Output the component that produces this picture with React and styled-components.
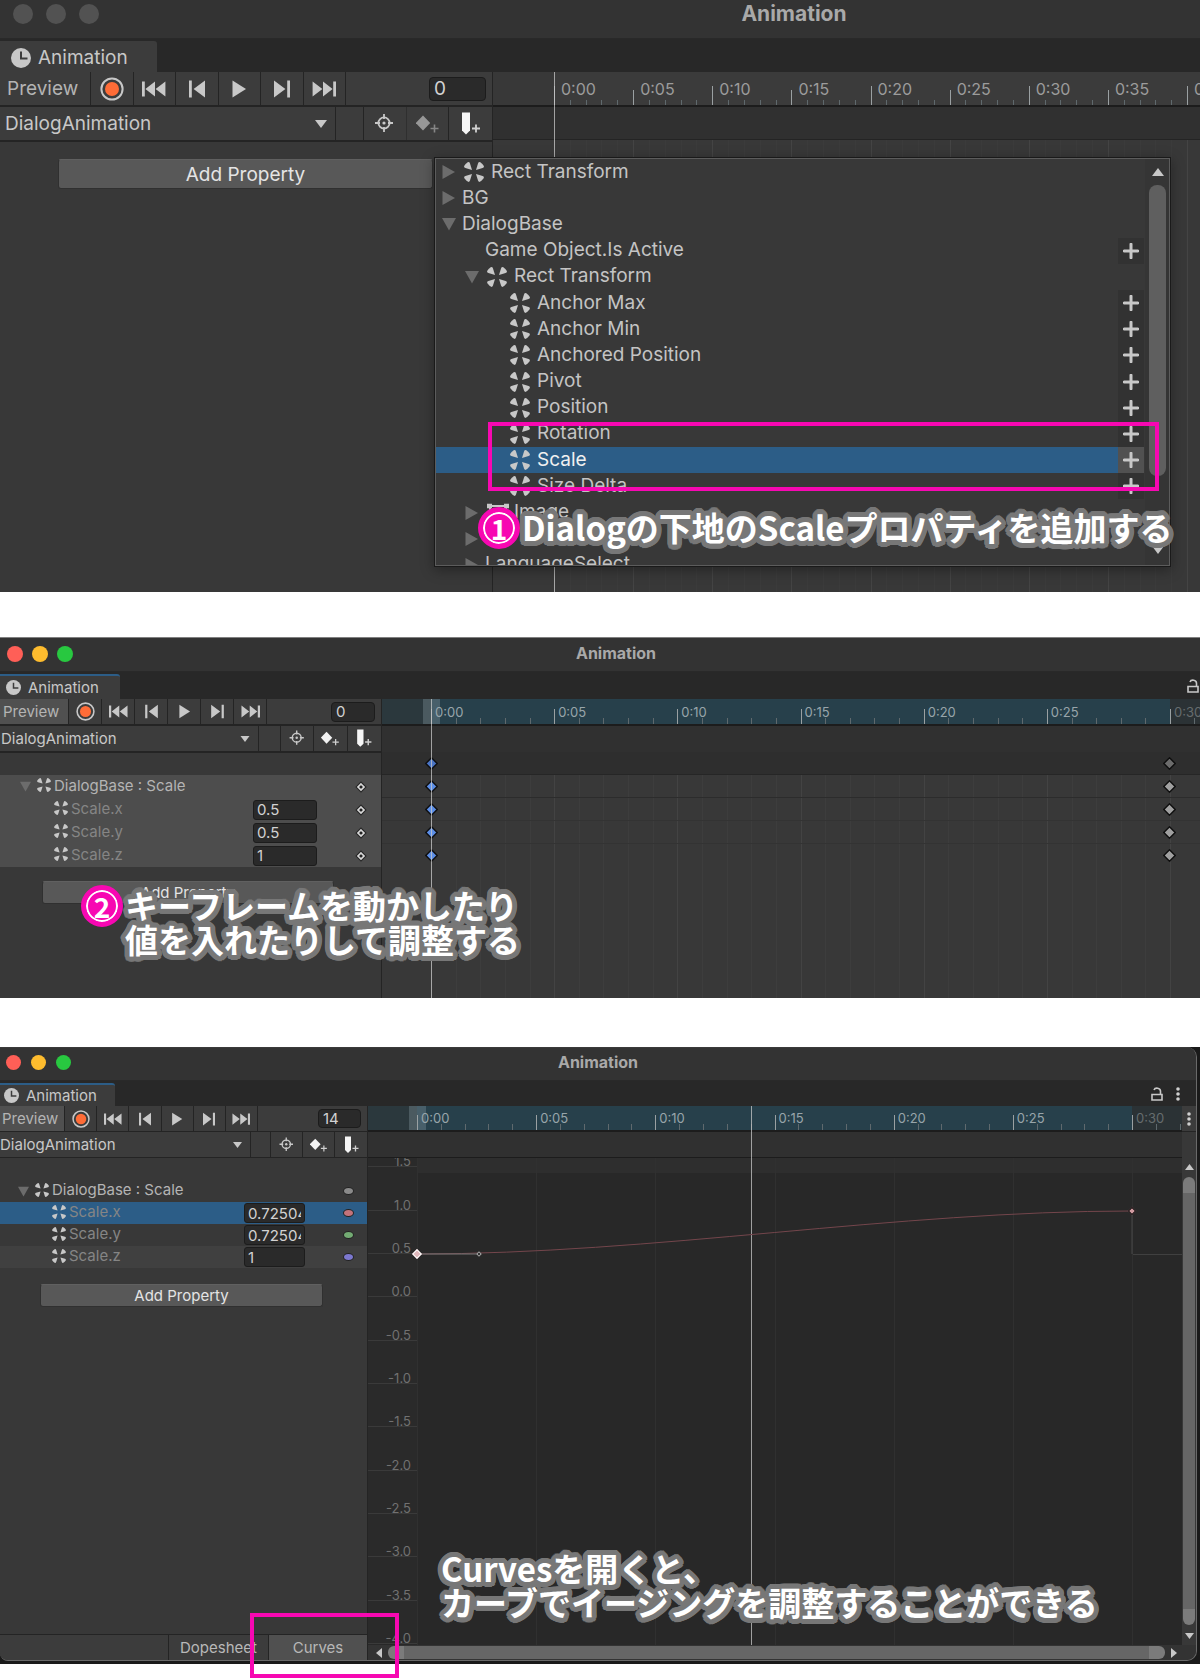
import React from "react";
import styled, { createGlobalStyle, css, ThemeProvider } from "styled-components";

const PINK = "#f708b2";
const LINE = "#242424";

const GlobalStyle = createGlobalStyle`
  *, *::before, *::after { box-sizing: border-box; }
  body {
    margin: 0;
    background: #fff;
    color: #c8c8c8;
    font-family: Inter, "Noto Sans CJK JP", sans-serif;
  }
  button, input, select {
    font: inherit;
    color: inherit;
    margin: 0;
    padding: 0;
    border: 0;
    background: none;
  }
`;

/* Metrics of each captured window: the captures have different zoom levels. */
const large = {
  text: 19, title: 21, tick: 16, icon: 24, iconH: 16, clock: 20,
  over: 388, bar: 39, dot: 20, dotGap: 13, dotPad: 13, barPad: 11,
  tabs: 33, tabW: 157, tabPad: 11, row: 35, side: 493,
  preview: 90, previewPad: 7, group: 256, field: 57, fieldH: 24,
  select: 335, selectPad: 5, gap: 28, actions: 129,
  lead: 61, tail: 13, label: 7, major: 15, minor: 5, add: 58, addH: 30,
  line: 2,
};
const medium = {
  text: 15, title: 16, tick: 13, icon: 19, iconH: 13, clock: 15,
  over: 32, bar: 35, dot: 16, dotGap: 9, dotPad: 7, barPad: 2,
  tabs: 27, tabW: 120, tabPad: 6, row: 27, side: 382,
  preview: 68, previewPad: 3, group: 199, field: 44, fieldH: 20,
  select: 258, selectPad: 1, gap: 22, actions: 101,
  lead: 49, tail: 30, label: 4, major: 15, minor: 6, add: 42, addH: 23,
  rowH: 23, indent: 20, value: 64, valueEnd: 36, keyEnd: 14, line: 2,
};
const small = {
  ...medium,
  icon: 18, iconH: 12,
  over: 0, bar: 34, dot: 15, dotGap: 10, dotPad: 6, barPad: 3,
  tabs: 25, tabW: 115, tabPad: 4, row: 26, side: 368,
  preview: 64, previewPad: 2, group: 194, field: 43, fieldH: 19,
  select: 250, selectPad: 0, gap: 20, actions: 97,
  lead: 49, tail: 50, add: 40, rowH: 22, indent: 18, value: 61, valueEnd: 36, keyEnd: 13,
  line: 1,
};

const px = (key) => ({ theme }) => `${theme[key]}px`;

/* ---------- window frame ---------- */

const Page = styled.main`
  display: flex;
  flex-direction: column;
  overflow: hidden;
`;
const Frame = styled.section`
  position: relative;
  display: flex;
  flex-direction: column;
  height: ${(p) => p.$height}px;
  margin-bottom: ${(p) => p.$after}px;
  background: #383838;
  font-size: ${px("text")};
  line-height: 1;
  white-space: nowrap;
`;
const Clip = styled.div`
  flex: 1;
  display: flex;
  flex-direction: column;
  min-height: 0;
  overflow: hidden;
  ${(p) => p.$rounded && css`
    margin-right: 3px;
    border-right: 1px solid #6a6a6a;
    border-bottom: 1px solid #6a6a6a;
    border-radius: 0 10px 10px 8px;
  `}
`;
const TitleBar = styled.header`
  display: grid;
  grid-template-columns: 1fr auto 1fr;
  align-items: center;
  flex: none;
  width: calc(100% + ${px("over")});
  height: ${px("bar")};
  padding: 0 ${px("dotPad")} ${px("barPad")};
  background: #333;
  border-top: 1px solid ${(p) => p.$edge};
  border-bottom: 1px solid #292929;
`;
const Lights = styled.div`
  display: flex;
  gap: ${px("dotGap")};
`;
const Light = styled.span`
  width: ${px("dot")};
  height: ${px("dot")};
  border-radius: 50%;
  background: ${(p) => p.$color};
`;
const Title = styled.h2`
  margin: 0;
  padding-bottom: 1px;
  font-size: ${px("title")};
  font-weight: 700;
  line-height: 1;
  color: #a9a9a9;
`;
const TabBar = styled.div`
  display: flex;
  align-items: stretch;
  flex: none;
  width: calc(100% + ${px("over")});
  height: ${px("tabs")};
  padding: 2px 16px 0 0;
  background: #282828;
`;
const Tab = styled.button`
  display: flex;
  align-items: center;
  gap: 7px;
  width: ${px("tabW")};
  padding-left: ${px("tabPad")};
  background: #3c3c3c;
  border-top: 2px solid ${(p) => (p.$focused ? "#2c5d87" : "#3c3c3c")};
  border-radius: 0 3px 0 0;
`;
const TabTools = styled.div`
  display: flex;
  align-items: center;
  gap: 13px;
  margin-left: auto;
  padding-bottom: 2px;
`;
const IconButton = styled.button`
  display: flex;
  align-items: center;
  justify-content: center;
`;

/* ---------- left side ---------- */

const Body = styled.div`
  display: flex;
  flex: 1;
  min-height: 0;
`;
const Side = styled.div`
  display: flex;
  flex-direction: column;
  flex: none;
  width: ${px("side")};
  border-right: 1px solid ${LINE};
`;
const ToolRow = styled.div`
  display: flex;
  align-items: stretch;
  flex: none;
  height: ${px("row")};
  background: #3c3c3c;
  border-bottom: ${px("line")} solid ${LINE};
`;
const Preview = styled.button`
  width: ${px("preview")};
  padding-left: ${px("previewPad")};
  text-align: left;
  color: #b4b4b4;
  background: ${(p) => (p.$on ? "#505050" : "transparent")};
`;
const Group = styled.div`
  display: flex;
  width: ${(p) => p.theme[p.$size]}px;
  border-right: 1px solid ${(p) => (p.$closed ? LINE : "transparent")};
`;
const ToolButton = styled.button`
  display: flex;
  flex: 1;
  align-items: center;
  justify-content: center;
  min-width: 0;
  border-left: 1px solid ${LINE};
  opacity: ${(p) => (p.disabled ? 0.5 : 1)};
`;
const FrameField = styled.input`
  width: ${px("field")};
  height: ${px("fieldH")};
  margin: auto 6px auto auto;
  padding: 0 4px;
  background: #2a2a2a;
  border: 1px solid #1c1c1c;
  border-radius: 4px;
  color: #d2d2d2;
`;
const ClipPicker = styled.label`
  display: flex;
  align-items: center;
  width: ${px("select")};
  padding: 0 8px 0 ${px("selectPad")};
`;
const ClipSelect = styled.select`
  flex: 1;
  min-width: 0;
  appearance: none;
  outline: 0;
  line-height: 24px;
`;
const Blank = styled.div`
  width: ${px("gap")};
  border-left: 1px solid ${LINE};
`;
const AddButton = styled.button`
  flex: none;
  height: ${px("addH")};
  margin: ${(p) => p.$top}px ${(p) => p.$right}px 0 ${px("add")};
  background: #585858;
  border: 1px solid #303030;
  border-top-color: #606060;
  border-radius: 3px;
  color: #e4e4e4;
`;
const PropertyList = styled.ul`
  margin: ${(p) => p.$top}px 0 0;
  padding: 0;
  list-style: none;
`;
const PropertyRow = styled.li`
  display: flex;
  align-items: center;
  gap: 2px;
  height: ${px("rowH")};
  padding-left: ${(p) => (p.$child ? p.theme.indent + 34 : p.theme.indent)}px;
  padding-right: ${px("keyEnd")};
  background: ${(p) => p.$bg};
  color: ${(p) => (p.$child ? "#858585" : "#b4b4b4")};
  & > svg { flex: none; }
`;
const PropertyName = styled.span`
  display: flex;
  flex: 1;
  align-items: center;
  gap: 3px;
  padding-bottom: 3px;
`;
const ValueField = styled.input`
  width: ${px("value")};
  height: 20px;
  margin: 0 ${px("valueEnd")} 0 auto;
  padding: 0 3px;
  background: #2a2a2a;
  border: 1px solid #1c1c1c;
  border-radius: 3px;
  color: #d2d2d2;
`;
const KeyDot = styled.span`
  flex: none;
  width: 11px;
  height: 8px;
  border-radius: 50%;
  border: 1px solid #222;
  background: ${(p) => p.$color};
`;
const ModeBar = styled.div`
  display: grid;
  grid-template-columns: 168fr 100fr 99fr;
  flex: none;
  height: 26px;
  margin-top: auto;
  background: #3c3c3c;
  border-top: 1px solid ${LINE};
`;
const Mode = styled.button`
  border-left: 1px solid ${LINE};
  background: ${(p) => (p.$on ? "#505050" : "transparent")};
  color: #b8b8b8;
`;

/* ---------- timeline ---------- */

const Timeline = styled.div`
  position: relative;
  display: flex;
  flex-direction: column;
  flex: 1;
  min-width: 0;
  overflow: hidden;
`;
const Track = styled.div`
  position: relative;
  display: flex;
  align-items: stretch;
  flex: none;
  height: ${(p) => p.$height || p.theme.row}px;
  background: ${(p) => p.$bg || "transparent"};
  border-bottom: ${(p) => p.$rule || 0}px solid ${(p) => p.$ruleColor || "#1c1c1c"};
`;
const Lead = styled.div`
  flex: none;
  width: ${px("lead")};
  background: ${(p) => p.$bg || "transparent"};
`;
const Range = styled.div`
  position: relative;
  display: flex;
  flex: 1;
  min-width: 0;
  background: ${(p) => p.$bg || "transparent"};
`;
const Tail = styled.div`
  display: flex;
  flex: none;
  width: ${px("tail")};
  background: ${(p) => p.$bg || "transparent"};
`;
const Cell = styled.div`
  position: relative;
  display: flex;
  flex: ${(p) => (p.$loose ? "none" : 1)};
  width: ${(p) => (p.$loose ? "120px" : "auto")};
  align-items: flex-end;
`;
const Tick = styled.i`
  flex: 1;
  height: ${(p) => (p.$major ? p.theme.major + (p.$tall ? 4 : 0) : p.theme.minor)}px;
  border-left: 1px solid ${(p) => (p.$major ? "#9aa0a2" : "#5f696d")};
`;
const TickLabel = styled.span`
  position: absolute;
  top: 50%;
  left: ${px("label")};
  transform: translateY(-50%);
  font-size: ${px("tick")};
  color: ${(p) => p.$color || "#9c9c9c"};
`;
const Overlay = styled.div`
  position: absolute;
  inset: ${(p) => p.$top || 0}px 0 0;
  display: flex;
  pointer-events: none;
`;
const GridCell = styled.div`
  display: flex;
  flex: 1;
  border-left: 1px solid ${(p) => p.$color};
`;
const GridMinor = styled.i`
  flex: 1;
  border-right: 1px solid ${(p) => p.$color};
  &:last-child { border: 0; }
`;
const Playhead = styled.div`
  position: absolute;
  top: 0;
  bottom: 0;
  left: -1px;
  width: 1px;
  background: rgba(200, 200, 200, 0.75);
`;
const StartBand = styled.div`
  position: absolute;
  top: 0;
  bottom: 0;
  left: -8px;
  width: 17px;
  background: rgba(150, 170, 180, 0.3);
`;
const Keys = styled(Range)`
  align-items: center;
  justify-content: space-between;
  margin: 0 -6px 0 -6px;
`;

/* ---------- curve graph ---------- */

const Graph = styled.div`
  position: relative;
  display: flex;
  flex: 1;
  min-height: 0;
  overflow: hidden;
  background: linear-gradient(#2e2e2e 15px, #282828 15px);
`;
const Axis = styled.div`
  display: flex;
  flex-direction: column;
  flex: none;
  width: ${px("lead")};
  height: 520px;
  margin-top: -34px;
  background: #2a2a2a;
`;
const AxisStep = styled.div`
  display: flex;
  flex: 1;
  align-items: flex-end;
  justify-content: flex-end;
  padding-right: 6px;
  border-bottom: 1px solid #3a3a3a;
  font-size: ${px("tick")};
  line-height: 9px;
  color: #717171;
`;
const Plot = styled(Range)`
  z-index: 1;
  padding-top: 53px;
  align-items: flex-start;
`;
const CurveSvg = styled.svg`
  width: 100%;
  height: 43px;
  overflow: visible;
`;
const Resting = styled(Tail)`
  margin-top: 96px;
  border-top: 1px solid #404040;
`;
const Point = styled.span`
  position: absolute;
  width: ${(p) => p.$size}px;
  height: ${(p) => p.$size}px;
  transform: translate(-50%, -50%) rotate(45deg);
  background: ${(p) => p.$color};
  border: 1px solid ${(p) => p.$edge};
`;
const Rail = styled.div`
  display: flex;
  flex-direction: column;
  align-items: center;
  flex: none;
  width: 14px;
  padding-bottom: 6px;
  background: #383838;
`;
const RailHead = styled.div`
  display: flex;
  align-items: center;
  justify-content: center;
  width: 100%;
  height: 26px;
  margin-bottom: 32px;
  background: #3c3c3c;
  border-bottom: 1px solid ${LINE};
`;
const ThumbY = styled.div`
  flex: 1;
  width: 12px;
  margin: 7px 0 8px;
  border: solid #7b7b7b;
  border-width: 16px 0;
  border-radius: 6px;
  background: #666;
`;
const ScrollX = styled.div`
  display: flex;
  align-items: center;
  gap: 6px;
  flex: none;
  height: 15px;
  padding: 0 4px 0 8px;
  background: #333;
`;
const ThumbX = styled.div`
  flex: 1;
  height: 13px;
  border: solid #7b7b7b;
  border-width: 0 16px;
  border-radius: 6px;
  background: #666;
`;

/* ---------- property popup ---------- */

const Popup = styled.div`
  position: absolute;
  top: 157px;
  left: 434px;
  right: 29px;
  height: 410px;
  display: flex;
  overflow: hidden;
  background: #383838;
  border: 1px solid #1a1a1a;
  outline: 1px solid #5c5c5c;
  outline-offset: -2px;
  box-shadow: 0 3px 12px rgba(0, 0, 0, 0.35);
`;
const TreeView = styled.div`
  flex: 1;
  margin: 1px;
  overflow: hidden;
`;
const Tree = styled.ul`
  display: grid;
  grid-auto-rows: 1fr;
  height: 419px;
  margin: 0;
  padding: 0;
  list-style: none;
`;
const TreeRow = styled.li`
  display: flex;
  align-items: center;
  padding-left: ${(p) => 6 + p.$level * 23}px;
  background: ${(p) => (p.$on ? "#2c5d87" : "transparent")};
  color: ${(p) => (p.$on ? "#f0f0f0" : "#c4c4c4")};
`;
const TreeName = styled.span`
  padding-bottom: 2px;
`;
const Fold = styled.span`
  display: flex;
  width: ${(p) => (p.$icon ? 22 : 20)}px;
`;
const TreeIcon = styled.span`
  display: flex;
  width: 27px;
`;
const TreeAdd = styled.button`
  display: flex;
  align-items: center;
  justify-content: center;
  align-self: stretch;
  width: 26px;
  margin-left: auto;
  background: ${(p) => (p.$on ? "#515151" : "#323232")};
`;
const TreeScroll = styled.div`
  display: flex;
  flex-direction: column;
  align-items: center;
  width: 25px;
  padding: 10px 4px 12px;
  background: #353535;
`;
const TreeThumb = styled.div`
  width: 17px;
  height: 291px;
  margin: 9px 0 auto;
  border-radius: 8px;
  background: #5f5f5f;
`;

/* ---------- annotations ---------- */

const halo = Array.from({ length: 24 }, (_, i) => {
  const a = (i / 24) * Math.PI * 2;
  return `${(Math.cos(a) * 5).toFixed(1)}px ${(Math.sin(a) * 5).toFixed(1)}px 0 #777`;
}).join(", ");

const Caption = styled.div`
  position: absolute;
  top: ${(p) => p.$top}px;
  left: ${(p) => p.$left}px;
  display: flex;
  align-items: flex-start;
  gap: 2px;
`;
const CaptionText = styled.p`
  margin: 0;
  padding-top: 3px;
  font-family: "Noto Sans CJK JP", sans-serif;
  font-size: 33px;
  font-weight: 700;
  line-height: 34px;
  color: #fff;
  text-shadow: ${halo};
`;
const Badge = styled.span`
  display: flex;
  align-items: center;
  justify-content: center;
  width: 42px;
  height: 42px;
  border: 5px solid ${PINK};
  border-radius: 50%;
  background: ${PINK};
  box-shadow: inset 0 0 0 2px #fff;
  color: #fff;
  font-family: "Noto Sans CJK JP", sans-serif;
  font-size: 28px;
  font-weight: 700;
  line-height: 1;
`;
const Highlight = styled.div`
  position: absolute;
  top: ${(p) => p.$top}px;
  left: ${(p) => p.$left}px;
  right: ${(p) => p.$right};
  width: ${(p) => p.$width};
  height: ${(p) => p.$height}px;
  border: 4px solid ${PINK};
`;

/* ---------- icons ---------- */

const Clock = ({ size }) => (
  <svg width={size} height={size} viewBox="0 0 20 20">
    <circle cx="10" cy="10" r="10" fill="#c8c8c8" />
    <path d="M10 3.5V10.5H16.5" fill="none" stroke="#3c3c3c" strokeWidth="2" />
  </svg>
);
const Record = ({ size }) => (
  <svg width={size} height={size} viewBox="0 0 24 24">
    <circle cx="12" cy="12" r="10.6" fill="none" stroke="#c8c8c8" strokeWidth="2" />
    <circle cx="12" cy="12" r="7" fill="#ff6c37" />
  </svg>
);
const transport = {
  first: "M0 .5H2.8V15.5H0ZM13 .5V15.5L3.4 8ZM23.4 .5V15.5L13.6 8Z",
  prev: "M4 -.5H6.8V16.5H4ZM20 -.5V16.5L8.6 8Z",
  play: "M5.5 -.5V16.5L19 8Z",
  next: "M20 -.5H17.2V16.5H20ZM4 -.5V16.5L15.4 8Z",
  last: "M24 .5H21.2V15.5H24ZM11 .5V15.5L20.6 8ZM.6 .5V15.5L10.4 8Z",
};
const Transport = ({ kind, m }) => (
  <svg width={m.icon} height={m.iconH} viewBox="0 0 24 16" overflow="visible">
    <path d={transport[kind]} fill="#c8c8c8" />
  </svg>
);
const Target = ({ size }) => (
  <svg width={size} height={size} viewBox="0 0 24 24" fill="none" stroke="#c8c8c8" strokeWidth="1.8">
    <circle cx="11" cy="11" r="5.6" />
    <circle cx="11" cy="11" r="1.6" fill="#c8c8c8" stroke="none" />
    <path d="M11 2V7M11 15V20M2 11H7M15 11H20" />
  </svg>
);
const AddKey = ({ size }) => (
  <svg width={size} height={size} viewBox="0 0 24 24">
    <path d="M7 3.5L14.2 11L7 18.5L-.2 11Z" fill="#f2f2f2" />
    <path d="M18.5 12.5V20.5M14.5 16.5H22.5" stroke="#d0d0d0" strokeWidth="1.6" />
  </svg>
);
const AddEvent = ({ size }) => (
  <svg width={size} height={size} viewBox="0 0 24 24">
    <path d="M4 .5H12V18.5L8 22.5L4 18.5Z" fill="#f6f6f6" />
    <path d="M18 12.5V20.5M14 16.5H22" stroke="#d0d0d0" strokeWidth="1.8" />
  </svg>
);
const arrows = {
  down: [12, 8, "M0 0H12L6 8Z"],
  up: [12, 8, "M0 8H12L6 0Z"],
  left: [6, 10, "M6 0V10L0 5Z"],
  right: [6, 10, "M0 0V10L6 5Z"],
};
const Arrow = ({ dir, scale = 1, color = "#c8c8c8" }) => {
  const [w, h, d] = arrows[dir];
  return (
    <svg width={Math.round(w * scale)} height={Math.round(h * scale)} viewBox={`0 0 ${w} ${h}`}>
      <path d={d} fill={color} />
    </svg>
  );
};
const FoldArrow = ({ open, size = 14 }) => (
  <svg width={size} height={size} viewBox="0 0 14 14">
    <path d={open ? "M0 1H14L7 13.5Z" : "M.5 0V14L13 7Z"} fill="#6c6c6c" />
  </svg>
);
const RectTransform = ({ size = 20, color = "#c8c8c8" }) => (
  <svg width={size} height={size} viewBox="0 0 20 20" fill={color}>
    {[0, 90, 180, 270].map((r) => (
      <path
        key={r}
        transform={`rotate(${r} 10 10)`}
        d="M.1 4.4C.3 3.2 3.2 .3 4.4 .1Q5.6 .1 6 1.4L8 8L1.4 6Q.1 5.6 .1 4.4Z"
      />
    ))}
  </svg>
);
const ImageIcon = () => (
  <svg width="22" height="20" viewBox="0 0 22 20" fill="none" stroke="#c8c8c8" strokeWidth="2">
    <path d="M3 3H19V17H3Z" />
    <path d="M0 3H5M17 3H22M0 17H5M17 17H22" strokeWidth="4.5" />
  </svg>
);
const Plus = () => (
  <svg width="16" height="16" viewBox="0 0 16 16">
    <path d="M8 1.2V14.8M1.2 8H14.8" stroke="#c8c8c8" strokeWidth="3" strokeLinecap="round" />
  </svg>
);
const Lock = () => (
  <svg width="12" height="14" viewBox="0 0 12 14" fill="none" stroke="#c8c8c8" strokeWidth="1.6">
    <path d="M1 7.5H11V13H1Z" />
    <path d="M9.5 7.5V4.2C9.5 .6 4 .2 3 3" />
  </svg>
);
const Kebab = () => (
  <svg width="4" height="14" viewBox="0 0 4 14" fill="#d0d0d0">
    <circle cx="2" cy="2" r="1.8" />
    <circle cx="2" cy="7" r="1.8" />
    <circle cx="2" cy="12" r="1.8" />
  </svg>
);
const Diamond = ({ fill }) => (
  <svg width="13" height="13" viewBox="0 0 13 13">
    <path d="M6.5 .8L12.2 6.5L6.5 12.2L.8 6.5Z" fill={fill} stroke="#0e0e0e" strokeWidth="1.4" />
  </svg>
);
const KeyIcon = () => (
  <svg width="12" height="12" viewBox="0 0 12 12">
    <path d="M6 .3L11.7 6L6 11.7L.3 6Z" fill="#262626" />
    <path d="M6 3L9 6L6 9L3 6Z" fill="#222" stroke="#d8d8d8" strokeWidth="1.7" />
  </svg>
);

/* ---------- shared parts ---------- */

const LIVE = ["#ff5f57", "#febc2e", "#28c840"];
const IDLE = ["#525252", "#525252", "#525252"];

const TabIcon = styled.span`
  display: flex;
  width: ${px("clock")};
  & svg { width: 100%; height: auto; }
`;

function WindowTop({ lights, edge, focused, tools }) {
  return (
    <>
      <TitleBar $edge={edge}>
        <Lights>{lights.map((c, i) => <Light key={i} $color={c} />)}</Lights>
        <Title>Animation</Title>
      </TitleBar>
      <TabBar>
        <Tab $focused={focused}>
          <TabIcon><Clock size={20} /></TabIcon>
          Animation
        </Tab>
        {tools && (
          <TabTools>
            <IconButton aria-label="Lock"><Lock /></IconButton>
            <IconButton aria-label="Window menu"><Kebab /></IconButton>
          </TabTools>
        )}
      </TabBar>
    </>
  );
}

function Controls({ m, preview, frame, keysOff }) {
  return (
    <>
      <ToolRow>
        <Preview $on={preview}>Preview</Preview>
        <Group $size="group" $closed>
          <ToolButton aria-label="Record"><Record size={m.icon} /></ToolButton>
          {Object.keys(transport).map((kind) => (
            <ToolButton key={kind} aria-label={kind}><Transport kind={kind} m={m} /></ToolButton>
          ))}
        </Group>
        <FrameField aria-label="Frame" defaultValue={frame} />
      </ToolRow>
      <ToolRow>
        <ClipPicker>
          <ClipSelect aria-label="Clip" defaultValue="DialogAnimation">
            <option>DialogAnimation</option>
          </ClipSelect>
          <Arrow dir="down" scale={m.icon / 24} />
        </ClipPicker>
        <Blank />
        <Group $size="actions">
          <ToolButton aria-label="Filter by selection"><Target size={m.icon} /></ToolButton>
          <ToolButton aria-label="Add keyframe" disabled={keysOff}><AddKey size={m.icon} /></ToolButton>
          <ToolButton aria-label="Add event"><AddEvent size={m.icon} /></ToolButton>
        </Group>
      </ToolRow>
    </>
  );
}

const Ticks = ({ label, tall, color, loose }) => (
  <Cell $loose={loose}>
    <Tick $major $tall={tall} />
    {[1, 2, 3, 4].map((i) => <Tick key={i} />)}
    <TickLabel $color={color}>{label}</TickLabel>
  </Cell>
);

function Ruler({ labels, last, active, tallAlternate }) {
  return (
    <Track $bg={active ? "#2b3235" : "#3b3b3b"} $rule={2}>
      <Lead $bg={active ? "#2b383d" : "#383838"} />
      <Range $bg={active ? "#27404b" : undefined}>
        {active && <StartBand />}
        {labels.map((label, i) => (
          <Ticks key={label} label={label} tall={tallAlternate && i % 2 === 0} color={active && "#98a5aa"} />
        ))}
      </Range>
      <Tail>
        <Ticks label={last} loose tall={tallAlternate} color={active ? "#666c6e" : undefined} />
      </Tail>
    </Track>
  );
}

const Grid = ({ top, cells, color, minor }) => (
  <Overlay $top={top}>
    <Lead />
    <Range>
      {Array.from({ length: cells }, (_, i) => (
        <GridCell key={i} $color={color}>
          {minor && [0, 1, 2, 3, 4].map((j) => <GridMinor key={j} $color={minor} />)}
        </GridCell>
      ))}
    </Range>
    <Tail><GridCell $color={color} /></Tail>
  </Overlay>
);

const Cursor = ({ at }) => (
  <Overlay>
    <Lead />
    <Range><Playhead style={{ left: `${at * 100}%` }} /></Range>
    <Tail />
  </Overlay>
);

/* ---------- window 1: choosing the property ---------- */

const TREE = [
  { level: 0, fold: "closed", icon: "rect", name: "Rect Transform" },
  { level: 0, fold: "closed", name: "BG" },
  { level: 0, fold: "open", name: "DialogBase" },
  { level: 1, name: "Game Object.Is Active", add: true },
  { level: 1, fold: "open", icon: "rect", name: "Rect Transform" },
  ...["Anchor Max", "Anchor Min", "Anchored Position", "Pivot", "Position", "Rotation", "Scale", "Size Delta"]
    .map((name) => ({ level: 2, icon: "rect", name, add: true })),
  { level: 1, fold: "closed", icon: "image", name: "Image" },
  { level: 1, fold: "closed", name: "" },
  { level: 1, fold: "closed", name: "LanguageSelect" },
];

function PropertyWindow() {
  return (
    <ThemeProvider theme={large}>
      <Frame $height={592} $after={45}>
        <Clip>
          <WindowTop lights={IDLE} edge="#333" />
          <Body>
            <Side>
              <Controls m={large} frame="0" keysOff />
              <AddButton $top={17} $right={59}>Add Property</AddButton>
            </Side>
            <Timeline>
              <Ruler labels={["0:00", "0:05", "0:10", "0:15", "0:20", "0:25", "0:30", "0:35"]} last="0:40" tallAlternate />
              <Track $height={33} $bg="#303030" $rule={1} $ruleColor="#242424" />
              <Grid top={68} cells={8} color="#444" minor="#3b3b3b" />
              <Cursor at={0} />
            </Timeline>
          </Body>
        </Clip>
        <Popup>
          <TreeView>
            <Tree>
              {TREE.map((row, i) => (
                <TreeRow key={i} $level={row.level} $on={row.name === "Scale"}>
                  <Fold $icon={row.icon}>{row.fold && <FoldArrow open={row.fold === "open"} />}</Fold>
                  {row.icon && <TreeIcon>{row.icon === "rect" ? <RectTransform /> : <ImageIcon />}</TreeIcon>}
                  <TreeName>{row.name}</TreeName>
                  {row.add && <TreeAdd $on={row.name === "Scale"} aria-label={`Add ${row.name}`}><Plus /></TreeAdd>}
                </TreeRow>
              ))}
            </Tree>
          </TreeView>
          <TreeScroll>
            <Arrow dir="up" />
            <TreeThumb />
            <Arrow dir="down" />
          </TreeScroll>
        </Popup>
        <Highlight $top={422} $left={488} $right="41px" $height={69} />
        <Caption $top={507} $left={478}>
          <Badge>1</Badge>
          <CaptionText>Dialogの下地のScaleプロパティを追加する</CaptionText>
        </Caption>
      </Frame>
    </ThemeProvider>
  );
}

/* ---------- window 2: dopesheet ---------- */

const KeyTrack = ({ bg, start, end, rule }) => (
  <Track $height={23} $bg={bg} $rule={1} $ruleColor={rule}>
    <Lead />
    <Keys>
      <Diamond fill={start} />
      <Diamond fill={end} />
    </Keys>
    <Tail />
  </Track>
);

function DopesheetWindow() {
  const rows = [["Scale.x", "0.5"], ["Scale.y", "0.5"], ["Scale.z", "1"]];
  return (
    <ThemeProvider theme={medium}>
      <Frame $height={361} $after={49}>
        <Clip>
          <WindowTop lights={LIVE} edge="#808080" focused tools />
          <Body>
            <Side>
              <Controls m={medium} preview frame="0" />
              <PropertyList $top={22}>
                <PropertyRow $bg="#4d4d4d">
                  <FoldArrow open size={11} />
                  <PropertyIndent />
                  <PropertyName><RectTransform size={14} />DialogBase : Scale</PropertyName>
                  <KeyIcon />
                </PropertyRow>
                {rows.map(([name, value]) => (
                  <PropertyRow key={name} $child $bg="#4d4d4d">
                    <PropertyName><RectTransform size={14} />{name}</PropertyName>
                    <ValueField aria-label={name} defaultValue={value} />
                    <KeyIcon />
                  </PropertyRow>
                ))}
              </PropertyList>
              <AddButton $top={14} $right={47}>Add Property</AddButton>
            </Side>
            <Timeline>
              <Ruler labels={["0:00", "0:05", "0:10", "0:15", "0:20", "0:25"]} last="0:30" active />
              <Track $height={26} $bg="#303030" />
              <Grid top={76} cells={6} color="#434343" minor="#3d3d3d" />
              <KeyTrack bg="#2e2e2e" start="#4a74c4" end="#6c6c6c" rule="#262626" />
              {[0, 1, 2, 3].map((i) => (
                <KeyTrack key={i} start="#5c8ee6" end="#a0a0a0" rule={i === 3 ? "transparent" : i ? "#333" : "#2c2c2c"} />
              ))}
              <Cursor at={0} />
            </Timeline>
          </Body>
        </Clip>
        <Caption $top={248} $left={81}>
          <Badge>2</Badge>
          <CaptionText>キーフレームを動かしたり<br />値を入れたりして調整する</CaptionText>
        </Caption>
      </Frame>
    </ThemeProvider>
  );
}
const PropertyIndent = styled.span`
  width: 2px;
`;

/* ---------- window 3: curves ---------- */

function CurvesWindow() {
  const rows = [
    ["Scale.x", "0.72504", "#2c5d87", "#c4737b"],
    ["Scale.y", "0.72504", "transparent", "#73ab73"],
    ["Scale.z", "1", "#404040", "#7c78cf"],
  ];
  const steps = ["1.5", "1.0", "0.5", "0.0", "-0.5", "-1.0", "-1.5", "-2.0", "-2.5", "-3.0", "-3.5", "-4.0"];
  return (
    <ThemeProvider theme={small}>
      <DarkFrame $height={617} $after={14}>
        <Clip $rounded>
          <WindowTop lights={LIVE} edge="#3a3a3a" focused tools />
          <Body>
            <Side>
              <Controls m={small} preview frame="14" />
              <PropertyList $top={22}>
                <PropertyRow>
                  <FoldArrow open size={11} />
                  <PropertyIndent />
                  <PropertyName><RectTransform size={14} />DialogBase : Scale</PropertyName>
                  <KeyDot $color="#8a8a8a" />
                </PropertyRow>
                {rows.map(([name, value, bg, color]) => (
                  <PropertyRow key={name} $child $bg={bg}>
                    <PropertyName><RectTransform size={14} />{name}</PropertyName>
                    <ValueField aria-label={name} defaultValue={value} />
                    <KeyDot $color={color} />
                  </PropertyRow>
                ))}
              </PropertyList>
              <AddButton $top={16} $right={44}>Add Property</AddButton>
              <ModeBar>
                <span />
                <Mode>Dopesheet</Mode>
                <Mode $on>Curves</Mode>
              </ModeBar>
            </Side>
            <Stack>
              <Body>
                <Timeline>
                  <Ruler labels={["0:00", "0:05", "0:10", "0:15", "0:20", "0:25"]} last="0:30" active />
                  <Track $height={26} $bg="#303030" $rule={1} />
                  <Graph>
                    <Axis>{steps.map((s) => <AxisStep key={s}>{s}</AxisStep>)}</Axis>
                    <Plot>
                      <CurveSvg viewBox="0 0 715 43" preserveAspectRatio="none" fill="none">
                        <path d="M0 43C238 43 477 0 715 0" stroke="#74464c" vectorEffect="non-scaling-stroke" />
                        <path d="M0 43H62" stroke="#777" vectorEffect="non-scaling-stroke" />
                        <path d="M715 0V43" stroke="#484848" vectorEffect="non-scaling-stroke" />
                      </CurveSvg>
                      <Point $size={7} $color="#e0b8bc" $edge="#fff" style={{ left: "0%", top: 96 }} />
                      <Point $size={4} $color="#222" $edge="#aaa" style={{ left: "8.7%", top: 96 }} />
                      <Point $size={6} $color="#d09aa0" $edge="#050505" style={{ left: "100%", top: 53 }} />
                    </Plot>
                    <Resting />
                    <Grid cells={6} color="#303030" />
                  </Graph>
                  <Cursor at={14 / 30} />
                </Timeline>
                <Rail>
                  <RailHead><Kebab /></RailHead>
                  <Arrow dir="up" scale={0.75} />
                  <ThumbY />
                  <Arrow dir="down" scale={0.75} />
                </Rail>
              </Body>
              <ScrollX>
                <Arrow dir="left" />
                <ThumbX />
                <ScrollEnd><Arrow dir="right" /></ScrollEnd>
              </ScrollX>
            </Stack>
          </Body>
        </Clip>
        <Highlight $top={566} $left={250} $width="149px" $height={65} />
        <Caption $top={501} $left={441}>
          <CaptionText>Curvesを開くと、<br />カーブでイージングを調整することができる</CaptionText>
        </Caption>
      </DarkFrame>
    </ThemeProvider>
  );
}
const DarkFrame = styled(Frame)`
  padding-bottom: 3px;
  background: #1a1a1a;
  ${Clip} { background: #383838; }
`;
const Stack = styled.div`
  display: flex;
  flex-direction: column;
  flex: 1;
  min-width: 0;
`;
const ScrollEnd = styled.span`
  display: flex;
  width: 21px;
`;

export default function App() {
  return (
    <>
      <GlobalStyle />
      <Page>
        <PropertyWindow />
        <DopesheetWindow />
        <CurvesWindow />
      </Page>
    </>
  );
}
